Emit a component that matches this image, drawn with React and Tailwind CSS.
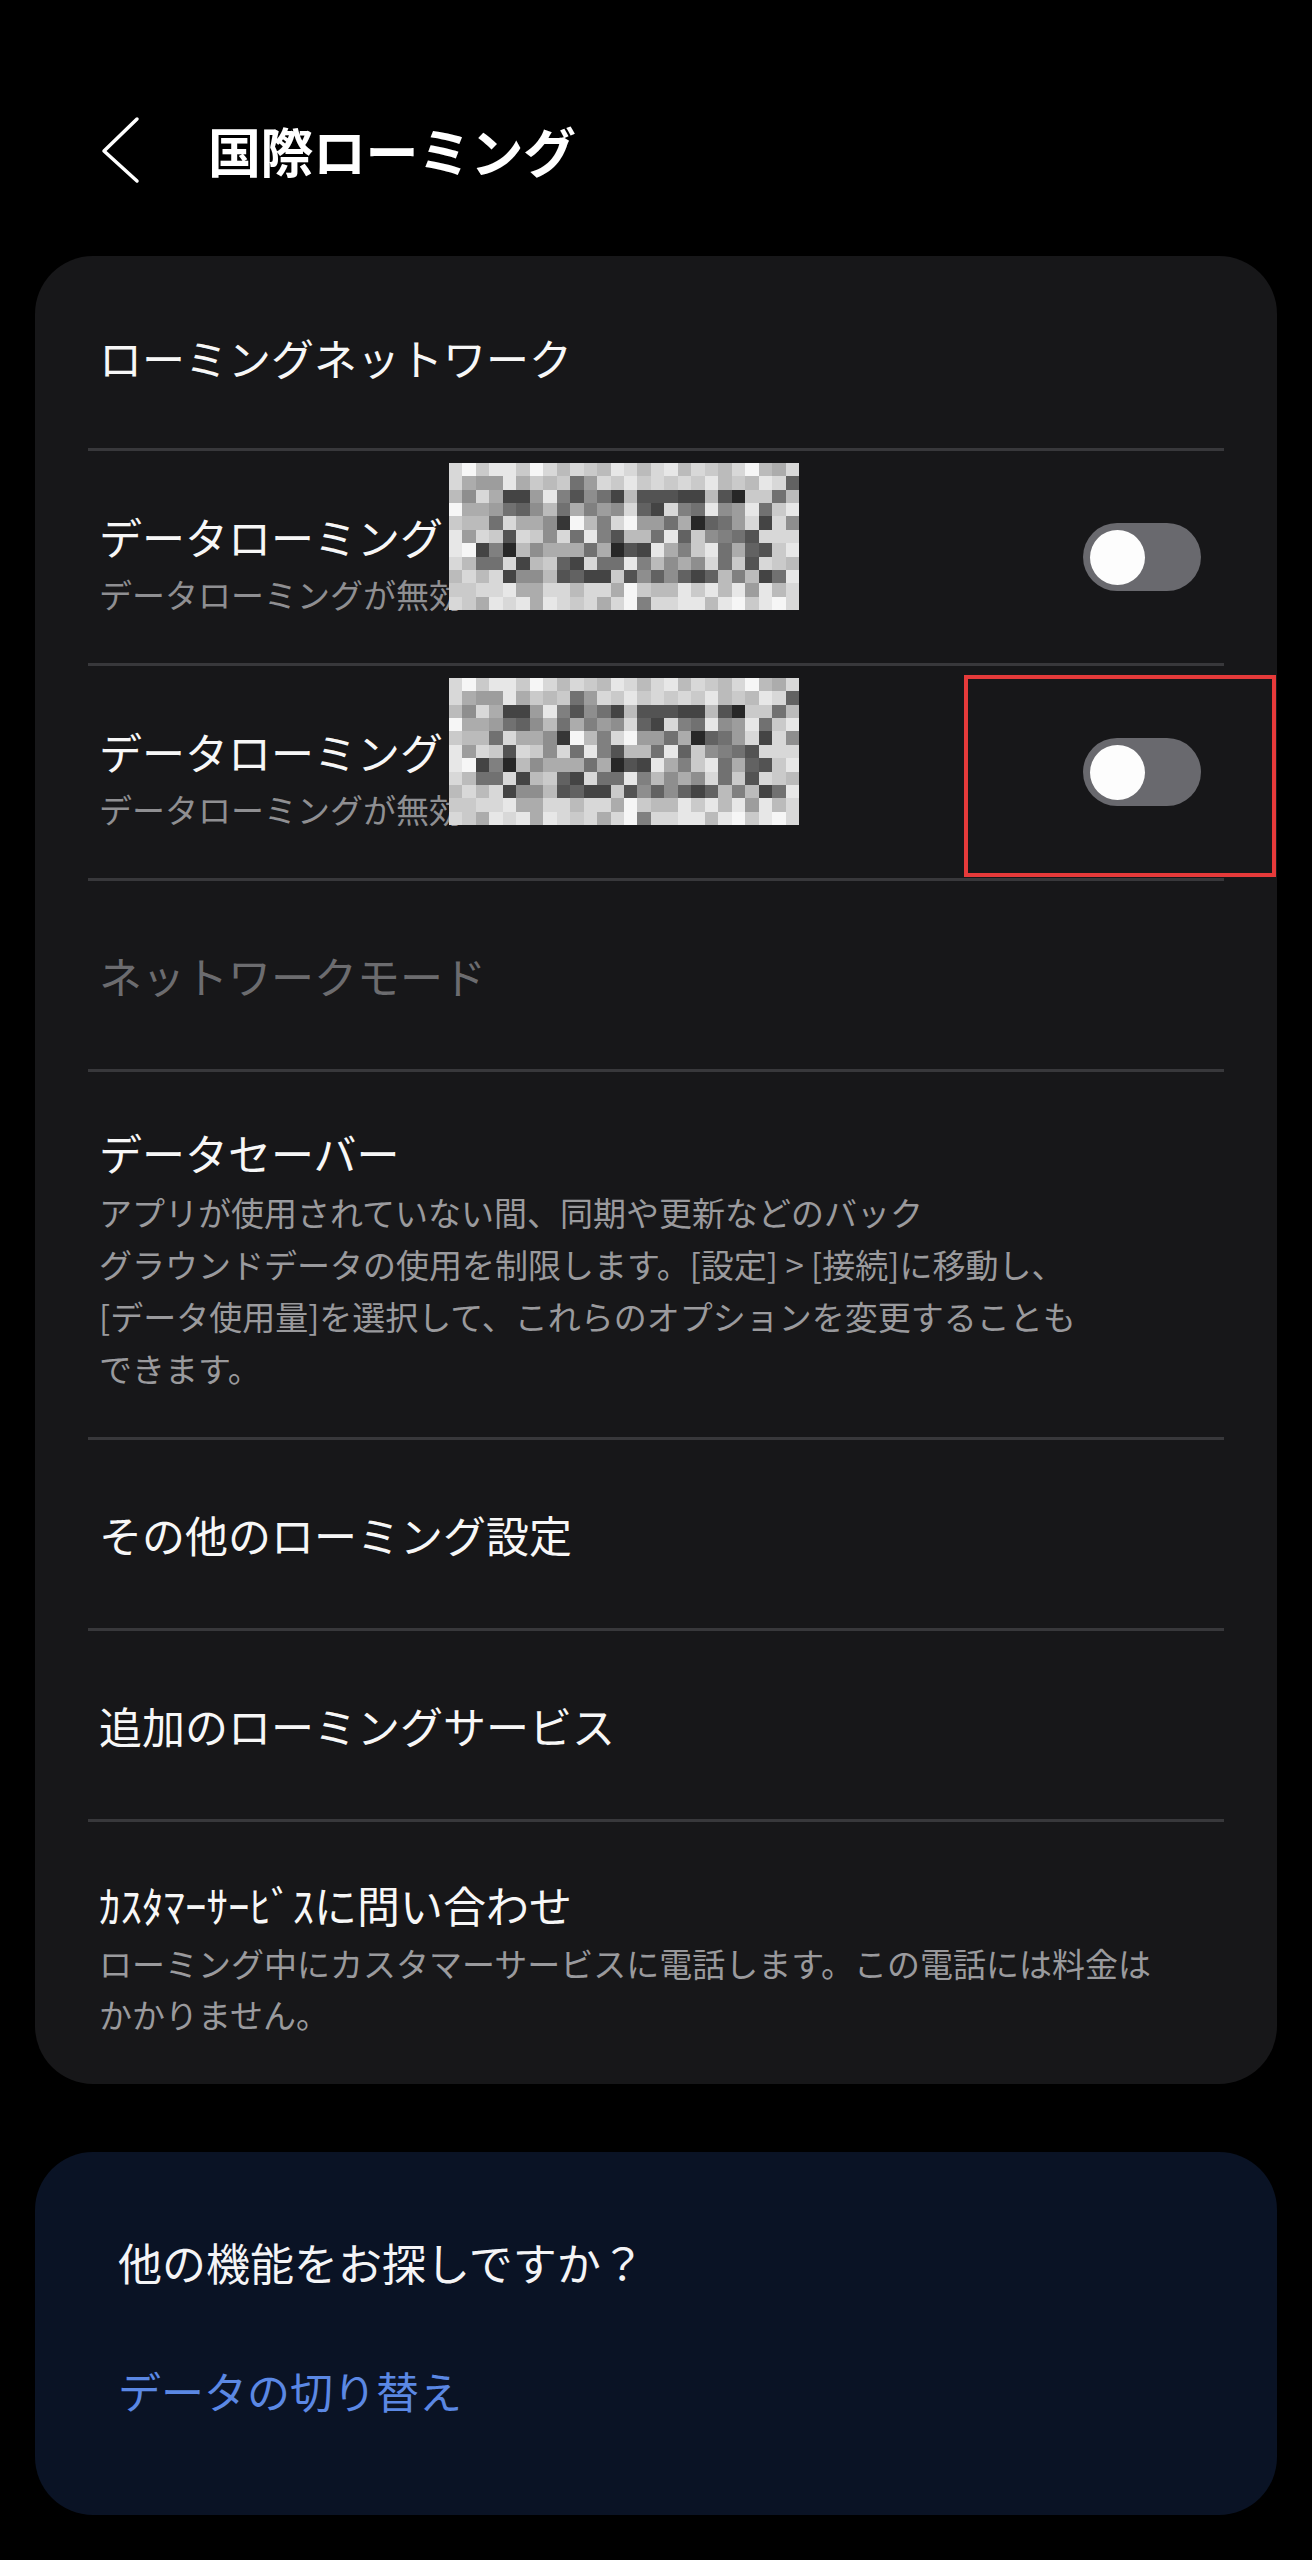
import React from 'react';

const font = { fontFamily: '"Noto Sans CJK JP", "Noto Sans", sans-serif' };

// mosaic that hides part of the SIM name (luminance per cell, 0 = black, f = white)
const mosaicRows = [
  'dfceecfdbdcbedbdebdcbdfbad',
  'da99eacbc69dcecdcdcebcbed5',
  'b8da339e74863b44433b41cc6b',
  'faa9658b6a798d53d76e89e6ce',
  'cbb6daa82fb7df996a1569d3d8',
  'e9dc4dc8d6e74bb6e5c8764',
  'ef371b8aaa6a143ea7ce6a54ce',
  'db66d3bc53d66e7b8a8d6c4dcb',
  'bdbd388b4533c4858535b7b36e',
  'ccddeaaddbddafcbbecebe9ebd',
  'dcaedeaedcdadf7ddeebefcef',
];

const Mosaic = () => (
  <div className="absolute left-[414px] top-[12px] grid w-[350px] h-[147px] grid-cols-[repeat(26,minmax(0,1fr))] grid-rows-[repeat(11,minmax(0,1fr))]">
    {mosaicRows.map((row, r) =>
      Array.from({ length: 26 }).map((_, c) => {
        const v = parseInt(row[c] || 'd', 16);
        const g = Math.round(24 + v * 14.8);
        return <div key={`${r}-${c}`} style={{ backgroundColor: `rgb(${g},${g},${g})` }} />;
      })
    )}
  </div>
);

const Toggle = () => (
  <div className="w-[118px] h-[68px] rounded-full bg-[#69696e] flex items-center pl-[7px] flex-shrink-0">
    <div className="w-[55px] h-[55px] rounded-full bg-[#fdfdfd]" />
  </div>
);

const Divider = () => <div className="h-[3px] mx-[53px] bg-[#38383b]" />;

const SimpleRow = ({ title, dim }) => (
  <div className="pl-[64px] pr-[78px] py-[66px]">
    <div className={`text-[43px] leading-[56px] ${dim ? 'text-[#6c6c6f]' : 'text-[#f7f7f7]'}`}>{title}</div>
  </div>
);

const RoamingToggleRow = ({ highlighted }) => (
  <div className="relative flex items-center pl-[64px] pr-[76px]">
    <div className="flex-1 min-w-0 pt-[57px] pb-[43px]">
      <div className="text-[43px] leading-[56px] text-[#f7f7f7] whitespace-nowrap">データローミング</div>
      <div className="mt-[4px] text-[33px] leading-[52px] text-[#8f8f92] whitespace-nowrap">データローミングが無効</div>
    </div>
    <Toggle />
    <Mosaic />
    {highlighted && (
      <div className="absolute left-[929px] top-[9px] w-[312px] h-[202px] border-[4px] border-[#e63a3a]" />
    )}
  </div>
);

export default function App() {
  return (
    <div className="bg-black min-h-[2560px] w-full pt-[120px] pb-[40px]" style={font}>
      {/* header */}
      <div className="flex items-center h-[60px] mb-[76px] pl-[100px]">
        <svg width="42" height="70" viewBox="0 0 42 70" fill="none" className="flex-shrink-0">
          <path d="M37 4 L4 36 L37 66" stroke="#ffffff" strokeWidth="3.5" strokeLinecap="round" strokeLinejoin="round" />
        </svg>
        <h1 className="ml-[66px] text-[53px] leading-[60px] font-bold text-white tracking-[-0.5px]">国際ローミング</h1>
      </div>

      {/* main settings card */}
      <div className="mx-[35px] rounded-[58px] bg-[#171719] overflow-hidden">
        <div className="pl-[64px] pr-[78px] pt-[73px] pb-[63px]">
          <div className="text-[43px] leading-[56px] text-[#f7f7f7]">ローミングネットワーク</div>
        </div>
        <Divider />
        <RoamingToggleRow />
        <Divider />
        <RoamingToggleRow highlighted />
        <Divider />
        <SimpleRow title="ネットワークモード" dim />
        <Divider />
        <div className="pl-[64px] pr-[78px] pt-[52px] pb-[43px]">
          <div className="text-[43px] leading-[56px] text-[#f7f7f7]">データセーバー</div>
          <div className="mt-[6px] text-[33px] leading-[52px] text-[#9a9a9d]">
            アプリが使用されていない間、同期や更新などのバック
            <br />
            グラウンドデータの使用を制限します。[設定] &gt; [接続]に移動し、
            <br />
            [データ使用量]を選択して、これらのオプションを変更することも
            <br />
            できます。
          </div>
        </div>
        <Divider />
        <SimpleRow title="その他のローミング設定" />
        <Divider />
        <SimpleRow title="追加のローミングサービス" />
        <Divider />
        <div className="pl-[64px] pr-[78px] pt-[54px] pb-[44px]">
          <div className="text-[43px] leading-[56px] text-[#f7f7f7]">ｶｽﾀﾏｰｻｰﾋﾞｽに問い合わせ</div>
          <div className="mt-[6px] text-[33px] leading-[51px] text-[#9a9a9d]">
            ローミング中にカスタマーサービスに電話します。この電話には料金は
            <br />
            かかりません。
          </div>
        </div>
      </div>

      {/* suggestion card */}
      <div className="mx-[35px] mt-[68px] rounded-[58px] bg-[#0a1325] pl-[83px] pr-[60px] pt-[82px] pb-[97px]">
        <div className="text-[44px] leading-[56px] text-[#f4f4f6]">他の機能をお探しですか？</div>
        <div className="mt-[72px] text-[43px] leading-[56px] text-[#5b88e4]">データの切り替え</div>
      </div>
    </div>
  );
}
